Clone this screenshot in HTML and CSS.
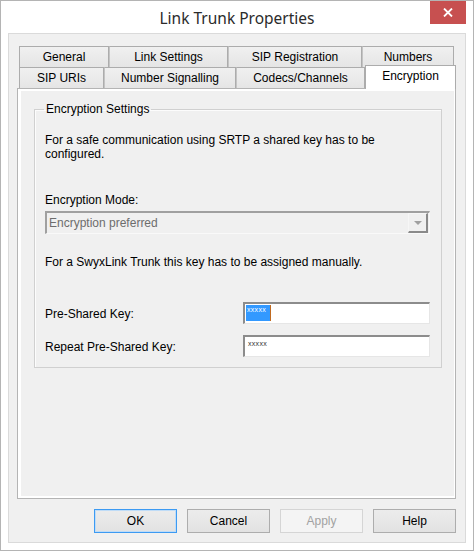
FILE: index.html
```html
<!DOCTYPE html>
<html lang="en">
<head>
    <meta charset="UTF-8">
    <title>Link Trunk Properties</title>
    <link rel="stylesheet" href="styles.css">
</head>
<body>
    <div class="window">
        <div class="titlebar">
            <span></span>
            <span class="title">Link Trunk Properties</span>
            <button class="close" aria-label="Close">
                <svg width="10" height="9" viewBox="0 0 10 9">
                    <path d="M1 0.5 L9 8.5 M9 0.5 L1 8.5" stroke="#fff" stroke-width="1.8"/>
                </svg>
            </button>
        </div>

        <div class="client">
            <!-- Tab strip, two rows -->
            <div class="tabs">
                <div class="tab-row back">
                    <div class="tab" style="width:90px">General</div>
                    <div class="tab" style="width:119px">Link Settings</div>
                    <div class="tab" style="width:134px">SIP Registration</div>
                    <div class="tab" style="width:92px">Numbers</div>
                </div>
                <div class="tab-row front">
                    <div class="tab" style="width:85px">SIP URIs</div>
                    <div class="tab" style="width:132px">Number Signalling</div>
                    <div class="tab" style="width:129px">Codecs/Channels</div>
                    <div class="tab active" style="width:91px">Encryption</div>
                </div>
            </div>

            <div class="panel">
                <fieldset class="group">
                    <legend>Encryption Settings</legend>
                    <p class="intro">For a safe communication using SRTP a shared key has to be configured.</p>

                    <p class="label mode-label">Encryption Mode:</p>
                    <div class="combo">
                        <span class="combo-text">Encryption preferred</span>
                        <span class="combo-btn"><span class="arrow"></span></span>
                    </div>

                    <p class="note">For a SwyxLink Trunk this key has to be assigned manually.</p>

                    <div class="field first">
                        <span class="label">Pre-Shared Key:</span>
                        <div class="edit"><span class="sel">xxxxx</span><span class="caret"></span></div>
                    </div>
                    <div class="field">
                        <span class="label">Repeat Pre-Shared Key:</span>
                        <div class="edit"><span class="pw">xxxxx</span></div>
                    </div>
                </fieldset>
            </div>

            <div class="buttons">
                <button class="btn default">OK</button>
                <button class="btn">Cancel</button>
                <button class="btn" disabled>Apply</button>
                <button class="btn">Help</button>
            </div>
        </div>
    </div>
</body>
</html>
```

FILE: styles.css
```css
body {
    margin: 0;
    background: #fff;
    font-family: 'Liberation Sans', Arial, sans-serif;
    font-size: 12px;
    color: #000;
}
p {
    margin: 0;
}
.window {
    width: 474px;
    height: 551px;
    box-sizing: border-box;
    border: 1px solid #b4b4b4;
    background: #fff;
    padding: 0 7px 7px;
    display: flex;
    flex-direction: column;
}
.titlebar {
    height: 32px;
    display: grid;
    grid-template-columns: 1fr auto 1fr;
    align-items: start;
}
.title {
    align-self: center;
    font-family: 'Noto Sans', 'Open Sans', sans-serif;
    font-size: 15.5px;
    color: #2b2b2b;
    padding-top: 1px;
}
.close {
    justify-self: end;
    width: 36px;
    height: 23px;
    border: none;
    padding: 0;
    background: #c75050;
    display: flex;
    align-items: center;
    justify-content: center;
}
.client {
    flex: 1;
    border: 1px solid #dadada;
    background: #f0f0f0;
    padding: 12px 9px 9px 8px;
    display: flex;
    flex-direction: column;
}

/* tabs */
.tabs {
    height: 42px;
    display: flex;
    flex-direction: column;
}
.tab-row {
    display: flex;
    height: 21px;
    margin-left: 2px;
}
.tab {
    box-sizing: border-box;
    height: 21px;
    border: 1px solid #acacac;
    border-bottom: none;
    background: linear-gradient(#f0f0f0, #e5e5e5);
    text-align: center;
    line-height: 21px;
    color: #000;
}
.tab + .tab {
    border-left-color: #c4c4c4;
}
.tab.active {
    height: 24px;
    margin-top: -2px;
    background: #fff;
    border-color: #acacac;
    line-height: 20px;
    position: relative;
    z-index: 1;
}
.panel {
    flex: 1;
    border: 1px solid #b4b4b4;
    box-shadow: inset 3px 2px 0 #fff, inset -1px -2px 0 #fff;
    background: #f0f0f0;
    padding: 13px 13px 0 16px;
}

/* group box */
.group {
    margin: 0;
    border: 1px solid #d0d0d0;
    box-shadow: inset 1px 1px 0 #fcfcfc;
    padding: 17px 11px 11px 10px;
    height: 266px;
    box-sizing: border-box;
}
.group legend {
    padding: 0 2px;
    margin-left: -1px;
    color: #000;
}
.intro {
    line-height: 14px;
    width: 350px;
}
.mode-label {
    margin-top: 32px;
    line-height: 14px;
}
.combo {
    margin-top: 4px;
    height: 23px;
    box-sizing: border-box;
    border-style: solid;
    border-width: 2px 1px 1px 2px;
    border-color: #a0a0a0 #f9f9f9 #f9f9f9 #a0a0a0;
    display: flex;
    align-items: center;
    background: #f0f0f0;
}
.combo-text {
    flex: 1;
    color: #6d6d6d;
    padding-left: 2px;
}
.combo-btn {
    width: 17px;
    height: 17px;
    margin-right: 1px;
    border-style: solid;
    border-width: 1px 2px 2px 1px;
    border-color: #f6f6f6 #8a8a8a #8a8a8a #f6f6f6;
    background: #f0f0f0;
    display: flex;
    align-items: center;
    justify-content: center;
}
.arrow {
    width: 0;
    height: 0;
    border-left: 4px solid transparent;
    border-right: 4px solid transparent;
    border-top: 4px solid #a0a0a0;
}
.note {
    margin-top: 21px;
    line-height: 14px;
}
.field {
    display: flex;
    align-items: center;
    margin-top: 11px;
}
.field.first {
    margin-top: 33px;
}
.field .label {
    width: 198px;
    padding-top: 2px;
}
.edit {
    width: 187px;
    height: 22px;
    box-sizing: border-box;
    border-style: solid;
    border-width: 2px 1px 1px 2px;
    border-color: #8c8c8c #e6e6e6 #e6e6e6 #8c8c8c;
    background: #fff;
    display: flex;
    align-items: flex-start;
    padding: 1px 0 0 1px;
    font-size: 7px;
    letter-spacing: 0.3px;
}
.sel {
    background: #3399ff;
    color: #fff;
    width: 23px;
    height: 16px;
    line-height: 10px;
    padding-left: 1px;
}
.caret {
    width: 1px;
    height: 16px;
    background: #c06a20;
}
.pw {
    color: #333;
    line-height: 10px;
    padding: 1px 0 0 2px;
}

/* buttons */
.buttons {
    margin-top: 10px;
    display: flex;
    justify-content: flex-end;
    gap: 10px;
    padding-right: 0;
}
.btn {
    width: 83px;
    height: 24px;
    border: 1px solid #adadad;
    background: linear-gradient(#ececec, #e2e2e2);
    font-family: 'Liberation Sans', Arial, sans-serif;
    font-size: 12px;
    color: #000;
    padding: 0;
}
.btn.default {
    border-color: #3c9af2;
    box-shadow: inset 0 0 0 1px #bfdcf7;
}
.btn:disabled {
    border-color: #d5d5d5;
    background: #f4f4f4;
    color: #a2a2a2;
}
```
